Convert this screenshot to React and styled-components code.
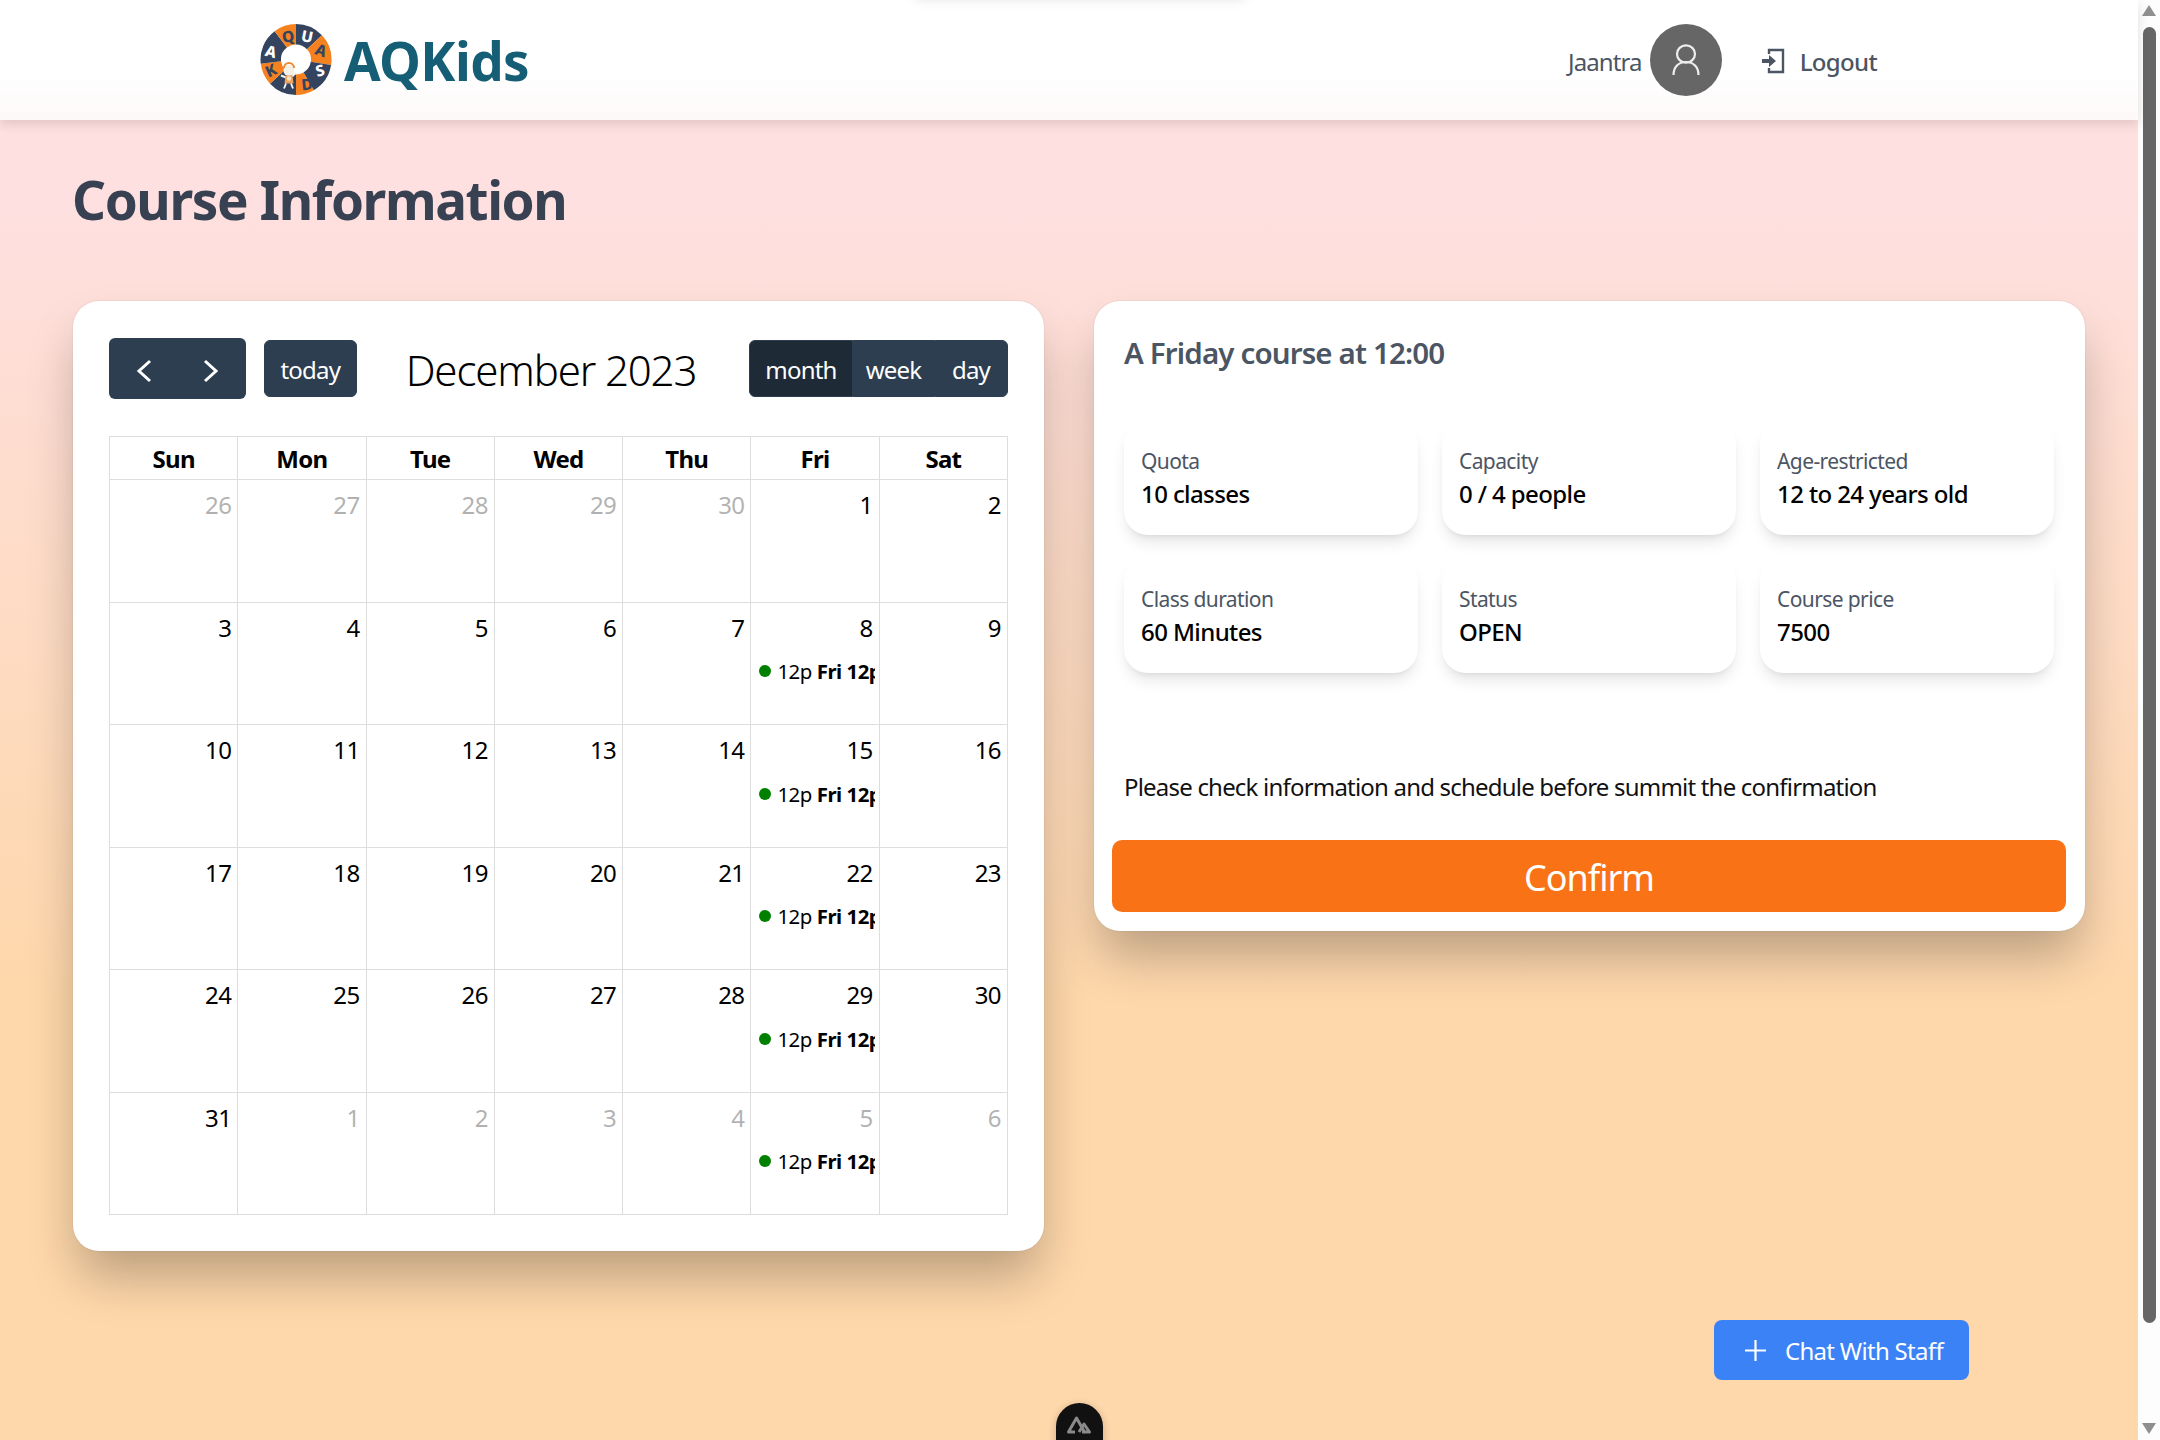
import React from 'react'
import styled, { createGlobalStyle } from 'styled-components'

const sans = `"Noto Sans", "Open Sans", sans-serif`

const GlobalStyle = createGlobalStyle`
    html, body {
        margin: 0;
        padding: 0;
    }
    body {
        font-family: ${sans};
        font-size: 24px;
    }
    * {
        box-sizing: border-box;
    }
`

const Viewport = styled.div`
    display: flex;
    position: relative;
    width: 2160px;
    height: 1440px;
    overflow: hidden;
`

const Page = styled.div`
    flex: 1;
    min-width: 0;
    position: relative;
    background: linear-gradient(180deg, #fee0e1 0, #fee0e1 190px, #fed7aa 1000px, #fed7aa 100%);
`

const Header = styled.header`
    display: flex;
    align-items: center;
    justify-content: space-between;
    height: 120px;
    padding: 0 261px 0 260px;
    background: linear-gradient(180deg, #ffffff 60%, #fdf9f8 100%);
    box-shadow: 0 4px 10px rgba(90, 50, 50, 0.16);
    position: relative;
`

const Brand = styled.div`
    display: flex;
    align-items: center;
    gap: 12px;
`

const BrandName = styled.span`
    padding-top: 2px;
    font-size: 53px;
    line-height: 60px;
    font-weight: 700;
    letter-spacing: -0.6px;
    color: #155e75;
`

const UserArea = styled.div`
    display: flex;
    align-items: center;
`

const UserName = styled.span`
    padding-top: 2px;
    font-size: 24px;
    color: #4b5563;
    letter-spacing: -0.9px;
    margin-right: 8px;
`

const Avatar = styled.div`
    display: flex;
    align-items: center;
    justify-content: center;
    width: 72px;
    height: 72px;
    border-radius: 50%;
    background: #666666;
`

const LogoutLink = styled.a`
    display: flex;
    align-items: center;
    gap: 15px;
    margin-left: 39px;
    padding-top: 2px;
    font-size: 24px;
    font-weight: 500;
    color: #4b5563;
    letter-spacing: -0.65px;
`

const Main = styled.main`
    padding: 48px 53px 0 73px;
`

const PageTitle = styled.h1`
    margin: 0 0 70px -1px;
    font-size: 53px;
    line-height: 63px;
    font-weight: 700;
    letter-spacing: -1.4px;
    color: #374151;
`

const Columns = styled.div`
    display: grid;
    grid-template-columns: 971px 991px;
    gap: 50px;
    align-items: start;
`

const Card = styled.section`
    background: #ffffff;
    border-radius: 26px;
    box-shadow: 0 30px 50px -6px rgba(0, 0, 0, 0.27), 0 0 2px rgba(0, 0, 0, 0.12);
`

const CalendarCard = styled(Card)`
    height: 950px;
    padding: 37px 36px 0;
`

const Toolbar = styled.div`
    display: flex;
    align-items: center;
    justify-content: space-between;
    height: 61px;
    margin-bottom: 37px;
`

const ToolbarGroup = styled.div`
    display: flex;
    align-items: center;
    gap: 18px;
`

const NavGroup = styled.div`
    display: flex;
    width: 137px;
    height: 61px;
    padding: 0 2px;
    border-radius: 6px;
    background: #2c3e50;
`

const NavButton = styled.button`
    flex: 1;
    display: flex;
    align-items: center;
    justify-content: center;
    padding: 5px 0 0;
    border: 0;
    background: none;
`

const ToolButton = styled.button`
    height: 57px;
    padding: 2px 15.5px 0;
    border: 1px solid #2c3e50;
    border-radius: ${p => p.$radius || '0'};
    background: ${p => (p.$active ? '#1e2b37' : '#2c3e50')};
    color: #ffffff;
    font-family: ${sans};
    font-size: 24px;
    letter-spacing: -0.8px;
`

const ViewGroup = styled.div`
    display: flex;
    width: 259px;
`

const ViewButton = styled(ToolButton)`
    flex: 0 0 auto;
    width: ${p => p.$width}px;
    padding: 2px 0 0;
`

const MonthTitle = styled.h2`
    margin: 2px 0 0 31px;
    width: 300px;
    font-size: 42px;
    font-weight: 300;
    letter-spacing: -1.15px;
    white-space: nowrap;
    color: #000000;
`

const Grid = styled.div`
    display: grid;
    grid-template-columns: repeat(7, 1fr);
    width: 899px;
    border-top: 1px solid #dddddd;
    border-left: 1px solid #dddddd;
`

const HeadCell = styled.div`
    display: flex;
    align-items: center;
    justify-content: center;
    height: 43px;
    border-right: 1px solid #dddddd;
    border-bottom: 1px solid #dddddd;
    font-size: 24px;
    font-weight: 700;
    letter-spacing: -0.7px;
    color: #000000;
`

const DayCell = styled.div`
    height: 122.5px;
    min-width: 0;
    overflow: hidden;
    border-right: 1px solid #dddddd;
    border-bottom: 1px solid #dddddd;
`

const DayNumber = styled.div`
    padding: 7px 6px 0 0;
    height: 55px;
    line-height: 36px;
    font-size: 24px;
    text-align: right;
    letter-spacing: -0.6px;
    color: #000000;
    opacity: ${p => (p.$muted ? 0.3 : 1)};
`

const EventRow = styled.div`
    display: flex;
    align-items: center;
    height: 27px;
    margin: 0 4px 0 8px;
    overflow: hidden;
    white-space: nowrap;
    font-size: 20.4px;
    letter-spacing: -0.5px;
    color: #000000;
`

const EventDot = styled.span`
    flex: none;
    width: 12px;
    height: 12px;
    margin-right: 6px;
    border-radius: 50%;
    background: #008000;
`

const EventTitle = styled.b`
    margin-left: 5px;
    font-weight: 700;
`

const InfoPanel = styled(Card)`
    height: 630px;
    padding: 0 18px;
    display: flex;
    flex-direction: column;
`

const PanelTitle = styled.h2`
    margin: 31px 0 0 12px;
    font-size: 29.5px;
    line-height: 42px;
    font-weight: 600;
    letter-spacing: -0.85px;
    color: #4b5563;
`

const StatGrid = styled.div`
    display: grid;
    grid-template-columns: repeat(3, 294px);
    column-gap: 24px;
    row-gap: 23px;
    margin: 46px 0 0 12px;
`

const StatCard = styled.div`
    height: 115px;
    padding: 25px 17px 0;
    border-radius: 24px;
    background: #ffffff;
    box-shadow: 0 10px 15px -3px rgba(0, 0, 0, 0.1), 0 4px 6px -4px rgba(0, 0, 0, 0.1);
`

const StatLabel = styled.div`
    font-size: 21px;
    line-height: 32px;
    letter-spacing: -0.6px;
    color: #4b5563;
`

const StatValue = styled.div`
    font-size: 24px;
    line-height: 34px;
    font-weight: 500;
    letter-spacing: -0.6px;
    color: #000000;
`

const Notice = styled.p`
    margin: 96px 0 0 12px;
    font-size: 24px;
    line-height: 36px;
    letter-spacing: -0.8px;
    white-space: nowrap;
    color: #111111;
`

const ConfirmButton = styled.button`
    width: 954px;
    height: 72px;
    margin: 35px 0 0;
    padding: 2px 0 0;
    border: 0;
    border-radius: 10px;
    background: #f97316;
    color: #ffffff;
    font-family: ${sans};
    font-size: 36px;
    letter-spacing: -1px;
`

const ChatButton = styled.button`
    position: absolute;
    left: 1714px;
    top: 1320px;
    display: flex;
    align-items: center;
    gap: 19px;
    width: 255px;
    height: 60px;
    padding: 0 0 0 31px;
    border: 0;
    border-radius: 8px;
    background: #3b82f6;
    color: #ffffff;
    font-family: ${sans};
    font-size: 24px;
    letter-spacing: -0.7px;
    white-space: nowrap;
`

const DevToolsTab = styled.div`
    position: absolute;
    left: 1056px;
    bottom: -24px;
    display: flex;
    justify-content: center;
    padding-top: 12px;
    width: 47px;
    height: 61px;
    border-radius: 24px;
    background: #111111;
    box-shadow: 0 2px 8px rgba(0, 0, 0, 0.2);
`

const TopGlow = styled.div`
    position: absolute;
    left: 915px;
    top: -20px;
    width: 330px;
    height: 20px;
    box-shadow: 0 0 12px rgba(0, 0, 0, 0.1);
`

const Scrollbar = styled.div`
    flex: 0 0 22px;
    display: flex;
    flex-direction: column;
    align-items: center;
    background: #fdfdfd;
    padding-top: 5px;
`

const ScrollArrow = styled.div`
    width: 0;
    height: 0;
    border-left: 7px solid transparent;
    border-right: 7px solid transparent;
    ${p => (p.$down
        ? 'border-top: 11px solid #8f8f8f; margin-top: 100px;'
        : 'border-bottom: 11px solid #8f8f8f; margin-bottom: 11px;')}
`

const ScrollThumb = styled.div`
    width: 13px;
    height: 1296px;
    border-radius: 7px;
    background: #666666;
`

const polar = (r, deg) => {
    const a = ((deg - 90) * Math.PI) / 180
    return [r * Math.cos(a), r * Math.sin(a)]
}

const wedge = (from, to, R, r) => {
    const [x1, y1] = polar(R, from)
    const [x2, y2] = polar(R, to)
    const [x3, y3] = polar(r, to)
    const [x4, y4] = polar(r, from)
    return `M${x1} ${y1}A${R} ${R} 0 0 1 ${x2} ${y2}L${x3} ${y3}A${r} ${r} 0 0 0 ${x4} ${y4}Z`
}

const navy = '#34445e'
const orange = '#f5811f'

const logoWedges = [
    { from: 0, to: 47, color: navy },
    { from: 47, to: 99, color: orange },
    { from: 99, to: 150, color: navy },
    { from: 150, to: 180, color: orange },
    { from: 180, to: 227, color: navy },
    { from: 227, to: 263, color: orange },
    { from: 263, to: 323, color: navy },
    { from: 323, to: 360, color: orange }
]

const logoLetters = [
    { ch: 'Q', x: -8, y: -23, rot: -10, fill: navy },
    { ch: 'U', x: 11, y: -23, rot: 12, fill: '#ffffff' },
    { ch: 'A', x: 25, y: -9, rot: 20, fill: navy },
    { ch: 'S', x: 24, y: 11, rot: -15, fill: '#ffffff' },
    { ch: 'D', x: 11, y: 25, rot: -6, fill: navy },
    { ch: 'K', x: -25, y: 11, rot: -25, fill: navy },
    { ch: 'A', x: -25, y: -8, rot: 15, fill: '#ffffff' }
]

const LogoMark = () => (
    <svg width="72" height="72" viewBox="-36 -35.5 72 72">
        {logoWedges.map(w => (
            <path key={w.from} d={wedge(w.from, w.to, 35.5, 15)} fill={w.color} />
        ))}
        {logoLetters.map(l => (
            <text
                key={l.ch + l.x}
                x={l.x}
                y={l.y + 5.5}
                textAnchor="middle"
                fontSize="15.5"
                fontWeight="800"
                fontFamily="Noto Sans, sans-serif"
                fill={l.fill}
                transform={`rotate(${l.rot} ${l.x} ${l.y})`}
            >
                {l.ch}
            </text>
        ))}
        <path d="M-15 16l5 2M0 13l-4 4" stroke="#f4f4f4" strokeWidth="2" />
        <circle cx="-7" cy="11" r="5.5" fill="#f4f0e8" />
        <path d="M-12 8.500a5 5 0 0 1 10 0" fill="none" stroke="#e88a2d" strokeWidth="2" />
        <path d="M-10.500 16h7l1 8h-9z" fill="#f0a45a" />
        <circle cx="-7" cy="19" r="2.200" fill="#f7e3c9" />
        <path d="M-10 24l-2 5M-5 24l2 5" stroke="#ffffff" strokeWidth="1.800" />
    </svg>
)

const UserGlyph = () => (
    <svg width="30" height="32" viewBox="0 0 30 32" fill="none" stroke="#eeeeee" strokeWidth="2.2">
        <ellipse cx="15" cy="10" rx="9" ry="8.6" />
        <path d="M2.5 31c0-8 5-13 12.500-13s12.500 5 12.500 13" />
    </svg>
)

const LogoutGlyph = () => (
    <svg width="24" height="26" viewBox="0 0 24 26" fill="none">
        <path d="M8 6V2h14v22H8v-4" stroke="#4b5563" strokeWidth="2.4" />
        <path d="M1 11h7V7l7 6-7 6v-4H1z" fill="#4b5563" />
    </svg>
)

const Chevron = ({ left }) => (
    <svg width="16" height="26" viewBox="0 0 16 26" fill="none" stroke="#ffffff" strokeWidth="3">
        <path d={left ? 'M14 3L3 13l11 10' : 'M2 3l11 10L2 23'} />
    </svg>
)

const PlusGlyph = () => (
    <svg width="21" height="21" viewBox="0 0 21 21" stroke="#ffffff" strokeWidth="2.2">
        <path d="M10.500 0v21M0 10.500h21" />
    </svg>
)

const NuxtGlyph = () => (
    <svg width="28" height="20" viewBox="0 0 28 20" fill="none" stroke="#8a8a8a" strokeWidth="3" strokeLinejoin="round">
        <path d="M9 17H2.500L10.500 3l8 14" />
        <path d="M13 17l5-8 5.500 8H16" />
    </svg>
)

const weekdays = ['Sun', 'Mon', 'Tue', 'Wed', 'Thu', 'Fri', 'Sat']

const days = [
    26, 27, 28, 29, 30, 1, 2,
    3, 4, 5, 6, 7, 8, 9,
    10, 11, 12, 13, 14, 15, 16,
    17, 18, 19, 20, 21, 22, 23,
    24, 25, 26, 27, 28, 29, 30,
    31, 1, 2, 3, 4, 5, 6
]

const stats = [
    { label: 'Quota', value: '10 classes' },
    { label: 'Capacity', value: '0 / 4 people' },
    { label: 'Age-restricted', value: '12 to 24 years old' },
    { label: 'Class duration', value: '60 Minutes' },
    { label: 'Status', value: 'OPEN' },
    { label: 'Course price', value: '7500' }
]

const isMuted = i => i < 5 || i > 35
const hasEvent = i => i % 7 === 5 && i > 5

const App = () => (
    <Viewport>
        <GlobalStyle />
        <Page>
            <Header>
                <Brand>
                    <LogoMark />
                    <BrandName>AQKids</BrandName>
                </Brand>
                <UserArea>
                    <UserName>Jaantra</UserName>
                    <Avatar>
                        <UserGlyph />
                    </Avatar>
                    <LogoutLink>
                        <LogoutGlyph />
                        Logout
                    </LogoutLink>
                </UserArea>
            </Header>
            <Main>
                <PageTitle>Course Information</PageTitle>
                <Columns>
                    <CalendarCard>
                        <Toolbar>
                            <ToolbarGroup>
                                <NavGroup>
                                    <NavButton><Chevron left /></NavButton>
                                    <NavButton><Chevron /></NavButton>
                                </NavGroup>
                                <ToolButton $radius="6px">today</ToolButton>
                                <MonthTitle>December 2023</MonthTitle>
                            </ToolbarGroup>
                            <ViewGroup>
                                <ViewButton $active $width={104} $radius="6px 0 0 6px">month</ViewButton>
                                <ViewButton $width={81}>week</ViewButton>
                                <ViewButton $width={74} $radius="0 6px 6px 0">day</ViewButton>
                            </ViewGroup>
                        </Toolbar>
                        <Grid>
                            {weekdays.map(d => <HeadCell key={d}>{d}</HeadCell>)}
                            {days.map((d, i) => (
                                <DayCell key={i}>
                                    <DayNumber $muted={isMuted(i)}>{d}</DayNumber>
                                    {hasEvent(i) && (
                                        <EventRow>
                                            <EventDot />
                                            12p<EventTitle>Fri 12pm</EventTitle>
                                        </EventRow>
                                    )}
                                </DayCell>
                            ))}
                        </Grid>
                    </CalendarCard>
                    <InfoPanel>
                        <PanelTitle>A Friday course at 12:00</PanelTitle>
                        <StatGrid>
                            {stats.map(s => (
                                <StatCard key={s.label}>
                                    <StatLabel>{s.label}</StatLabel>
                                    <StatValue>{s.value}</StatValue>
                                </StatCard>
                            ))}
                        </StatGrid>
                        <Notice>Please check information and schedule before summit the confirmation</Notice>
                        <ConfirmButton>Confirm</ConfirmButton>
                    </InfoPanel>
                </Columns>
            </Main>
            <TopGlow />
        </Page>
        <Scrollbar>
            <ScrollArrow />
            <ScrollThumb />
            <ScrollArrow $down />
        </Scrollbar>
        <ChatButton>
            <PlusGlyph />
            Chat With Staff
        </ChatButton>
        <DevToolsTab>
            <NuxtGlyph />
        </DevToolsTab>
    </Viewport>
)

export default App
